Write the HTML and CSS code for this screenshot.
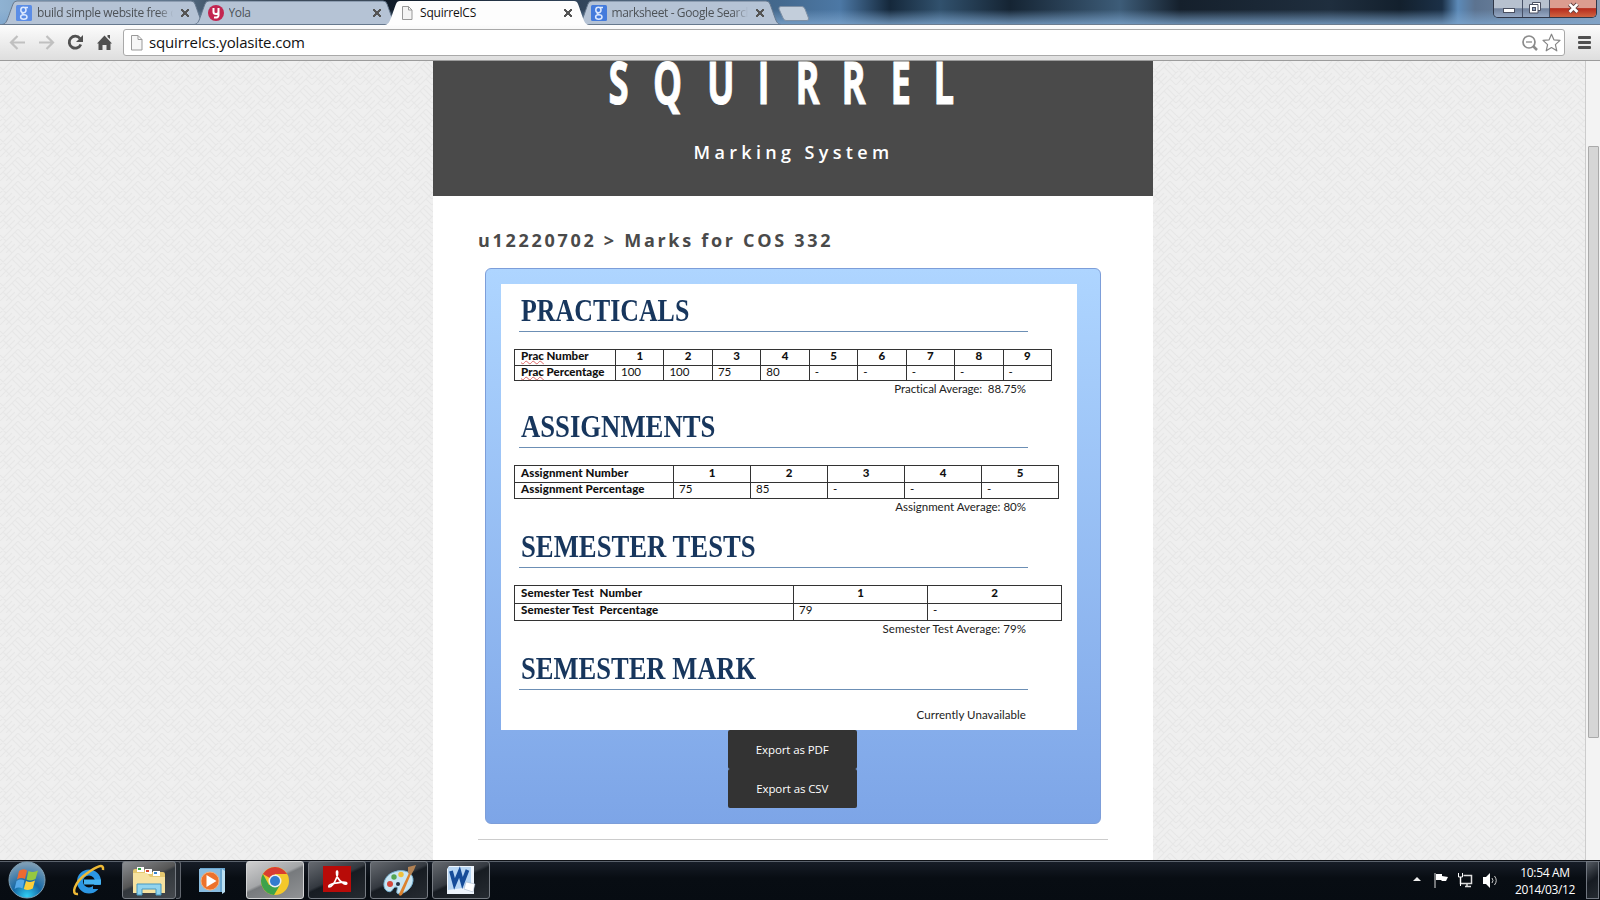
FILE: index.html
```html
<!DOCTYPE html>
<html lang="en">
<head>
<meta charset="utf-8">
<title>SquirrelCS</title>
<link rel="stylesheet" href="styles.css">
</head>
<body>
<div class="desktop">
  <header class="titlebar">
    <div class="tabs">
      <div class="tab">
        <svg class="tab-shape" viewBox="0 0 204 25"><path d="M0 24.5C5 24 5 20 11 4Q12 1 15 1H189Q192 1 193 4C199 20 199 24 204 24.5Z"/></svg>
        <svg class="favicon" viewBox="0 0 16 16"><rect width="16" height="16" rx="1.5" fill="#5b8de6"/><g fill="none" stroke="#dce9ff" stroke-width="1.5"><ellipse cx="7.4" cy="5" rx="2.6" ry="2.7"/><ellipse cx="7.8" cy="12" rx="3.2" ry="2.2"/><path d="M9 2.5h3M7 7.5q-2 1 1 2"/></g></svg>
        <span class="tab-title faded">build simple website free c</span><span class="tab-close"></span>
      </div>
      <div class="tab">
        <svg class="tab-shape" viewBox="0 0 204 25"><path d="M0 24.5C5 24 5 20 11 4Q12 1 15 1H189Q192 1 193 4C199 20 199 24 204 24.5Z"/></svg>
        <svg class="favicon" viewBox="0 0 16 16"><circle cx="8" cy="8" r="8" fill="#c32550"/><path d="M5.500 3v4q0 2 2.500 2t2.500-2V3M10.500 7v3.500q0 2.500-4.500 2" fill="none" stroke="#fff" stroke-width="2"/></svg>
        <span class="tab-title">Yola</span><span class="tab-close"></span>
      </div>
      <div class="tab active">
        <svg class="tab-shape" viewBox="0 0 204 25"><path d="M0 25C5 24 5 20 11 4Q12 1 15 1H189Q192 1 193 4C199 20 199 24 204 25Z"/></svg>
        <svg class="favicon" viewBox="0 0 16 16"><path d="M3.500 1.500h6l3.500 3.500v9.500h-9.500zM9.500 1.500v3.500h3.500" fill="#f4f4f4" stroke="#999"/></svg>
        <span class="tab-title">SquirrelCS</span><span class="tab-close"></span>
      </div>
      <div class="tab">
        <svg class="tab-shape" viewBox="0 0 204 25"><path d="M0 24.5C5 24 5 20 11 4Q12 1 15 1H189Q192 1 193 4C199 20 199 24 204 24.5Z"/></svg>
        <svg class="favicon" viewBox="0 0 16 16"><rect width="16" height="16" rx="1.5" fill="#447bdc"/><g fill="none" stroke="#dce9ff" stroke-width="1.5"><ellipse cx="7.4" cy="5" rx="2.6" ry="2.7"/><ellipse cx="7.8" cy="12" rx="3.2" ry="2.2"/><path d="M9 2.5h3M7 7.5q-2 1 1 2"/></g></svg>
        <span class="tab-title faded">marksheet - Google Search</span><span class="tab-close"></span>
      </div>
      <svg class="new-tab" viewBox="0 0 32 16"><path d="M3 .5H24Q26 .5 27 3L30.500 12Q31 14.500 29 14.500H8Q6 14.500 5 12L1 3Q.5.5 3 .5Z" fill="#c3cedb" stroke="#7e90a5"/></svg>
    </div>
    <div class="window-controls">
      <span class="win min"><svg viewBox="0 0 28 18"><rect x="9.500" y="8.500" width="11" height="4" fill="#fff" stroke="#4a4f60"/></svg></span>
      <span class="win restore"><svg viewBox="0 0 26 18"><path d="M9.500 2.500h8v8h-8z" fill="#fff" stroke="#4a4f60"/><path d="M6.500 4.500h8.500v8.500h-8.500z" fill="#fff" stroke="#4a4f60"/><rect x="9.500" y="7.500" width="3" height="3" fill="#8ea0c0" stroke="#4a4f60"/></svg></span>
      <span class="win close"><svg viewBox="0 0 47 18"><path d="M20 4l8 8m0-8l-8 8" stroke="#604040" stroke-width="4.500"/><path d="M20 4l8 8m0-8l-8 8" stroke="#fff" stroke-width="2.800"/></svg></span>
    </div>
  </header>

  <nav class="toolbar">
    <svg class="nav-icons" viewBox="0 0 123 36">
      <g fill="none" stroke="#c0c0c0" stroke-width="2.200"><path d="M25 17.500H11M17.500 11l-6.500 6.500 6.500 6.500M39 17.500h14M46.500 11l6.500 6.500-6.500 6.500"/></g>
      <path d="M80 13.500a6 6 0 1 0 .8 6" fill="none" stroke="#505050" stroke-width="2.800"/><path d="M83 10v7h-7z" fill="#505050"/>
      <path d="M97 18.500l7.500-8 7.500 8h-1.500V25h-4v-5h-4v5h-4v-6.500zM107.500 10h2.500v4l-2.500-2z" fill="#505050"/>
    </svg>
    <div class="address">
      <svg class="page-icon" viewBox="0 0 16 18"><path d="M2.500 1.500h6.500l4 4v10.500h-10.500zM9 1.500v4h4" fill="#f6f6f6" stroke="#999"/></svg>
      <span class="url">squirrelcs.yolasite.com</span>
      <svg class="address-tools" viewBox="0 0 42 20"><circle cx="8" cy="9" r="6" fill="none" stroke="#8b8b8b" stroke-width="1.700"/><path d="M5 9h6" stroke="#8b8b8b" stroke-width="1.300"/><path d="M12 13l4 4" stroke="#8b8b8b" stroke-width="2.500"/><path d="M30.500 1.200l2.400 5.600 6.100.6-4.600 4.200 1.400 6.200-5.300-3.200-5.300 3.200 1.400-6.200-4.600-4.200 6.100-.6z" fill="#fff" stroke="#858585" stroke-width="1.200" stroke-linejoin="round"/></svg>
    </div>
    <div class="menu"><i></i><i></i><i></i></div>
  </nav>

  <main class="viewport">
    <div class="site">
      <div class="banner">
        <svg class="brand" viewBox="0 0 360 48" aria-label="Squirrel"><text transform="scale(.62 1)" x="-.9 71 158 239.700 301 375 454 523.500" y="43">SQUIRREL</text></svg>
        <p class="tagline">Marking System</p>
      </div>
      <h2 class="crumb">u12220702 &gt; Marks for COS 332</h2>
      <section class="panel">
        <div class="sheet">
          <section class="block practicals">
            <h3><span>PRACTICALS</span></h3>
            <table>
              <tr><th><u>Prac</u> Number</th><th>1</th><th>2</th><th>3</th><th>4</th><th>5</th><th>6</th><th>7</th><th>8</th><th>9</th></tr>
              <tr><th><u>Prac</u> Percentage</th><td>100</td><td>100</td><td>75</td><td>80</td><td>-</td><td>-</td><td>-</td><td>-</td><td>-</td></tr>
            </table>
            <p>Practical Average:&nbsp; 88.75%</p>
          </section>
          <section class="block assignments">
            <h3><span>ASSIGNMENTS</span></h3>
            <table>
              <tr><th>Assignment Number</th><th>1</th><th>2</th><th>3</th><th>4</th><th>5</th></tr>
              <tr><th>Assignment Percentage</th><td>75</td><td>85</td><td>-</td><td>-</td><td>-</td></tr>
            </table>
            <p>Assignment Average: 80%</p>
          </section>
          <section class="block tests">
            <h3><span>SEMESTER TESTS</span></h3>
            <table>
              <tr><th>Semester Test&nbsp; Number</th><th>1</th><th>2</th></tr>
              <tr><th>Semester Test&nbsp; Percentage</th><td>79</td><td>-</td></tr>
            </table>
            <p>Semester Test Average: 79%</p>
          </section>
          <section class="block mark">
            <h3><span>SEMESTER MARK</span></h3>
            <p>Currently Unavailable</p>
          </section>
        </div>
        <div class="actions"><button>Export as PDF</button><button>Export as CSV</button></div>
      </section>
      <hr>
    </div>
    <div class="scrollbar"><div class="thumb"></div></div>
  </main>

  <footer class="taskbar">
    <svg class="start" viewBox="0 0 54 40">
      <defs><radialGradient id="orb" cx=".5" cy=".95" r=".9"><stop offset="0" stop-color="#2fd0f5"/><stop offset=".45" stop-color="#1668a5"/><stop offset="1" stop-color="#7d9db5"/></radialGradient></defs>
      <circle cx="27" cy="20" r="18" fill="url(#orb)" stroke="#7fa0b5"/>
      <path d="M19 11q4-3 8-.5l-2 8.500q-4-2-8 .5z" fill="#ee6a30"/><path d="M28.500 11q5 2 9.500-.5l-2.500 8.500q-4.500 2.500-9 .5z" fill="#95c840"/>
      <path d="M16.500 21q4-2.500 8-.5l-2 8q-4-2-8 .5z" fill="#55a9e8"/><path d="M26 21q4.500 2 9-.5l-2.200 8q-4.500 2.500-9 .5z" fill="#fccf3a"/>
    </svg>
    <div class="task plain ie"><svg viewBox="0 0 34 34"><circle cx="18" cy="17.500" r="9" fill="none" stroke="#2b96e3" stroke-width="6"/><path d="M13 15.500h17v5H13z" fill="#45b2f1"/><path d="M22 21h9v4h-9z" fill="#080d14"/><path d="M7 30C-1 31 4 18 15 10S33-1 32 6" fill="none" stroke="#efba36" stroke-width="2.500"/></svg></div>
    <div class="task explorer"><svg viewBox="0 0 34 34"><path d="M1 7q0-2 2-2h9l2 3h17q2 0 2 2v18H1z" fill="#e5c870"/><path d="M5 3h7v5H5zM13 5h7v5h-7zM21 7h7v5h-7z" fill="#fff"/><path d="M6 4h3v2H6z" fill="#35a646"/><path d="M14 6h3v2h-3z" fill="#d6472e"/><path d="M22 8h3v2h-3z" fill="#3585cb"/><path d="M1 9h14l3 4h15v16H1z" fill="#f6e2a0"/><path d="M5 31V20h24v11h-5v-6H10v6z" fill="#91d4ee" stroke="#4798c1"/></svg></div>
    <div class="task-edge"></div>
    <div class="task plain media"><svg viewBox="0 0 34 34"><path d="M5 4h25v24H5z" fill="#6aa6d0"/><path d="M27 5l3 2v21l-3 2" fill="#bbdff2"/><path d="M4 5h21v23H4z" fill="#8abde0"/><circle cx="15" cy="17" r="9" fill="#ed722b" stroke="#f5b07a"/><path d="M11.500 11l10 6-10 6z" fill="#fff"/></svg></div>
    <div class="task chrome"><svg viewBox="0 0 34 34"><circle cx="17" cy="17" r="14" fill="#f4c82a"/><path d="M17 17L4.900 10A14 14 0 0 1 29.100 10H17z" fill="#d93c30"/><path d="M4.900 10A14 14 0 0 0 16 31l6-10H11z" fill="#3ca24b"/><circle cx="17" cy="17" r="6.500" fill="#eee"/><circle cx="17" cy="17" r="5" fill="#327bce"/></svg></div>
    <div class="task adobe"><svg viewBox="0 0 34 34"><path d="M3 2h28v26H3z" fill="#b80b08"/><path d="M9 23c-2-3 8-4 14-5 6 0 4 4 0 1-4-2-7-7-6.500-11 1-3 2 1 0 6s-5 9-7.500 9z" fill="none" stroke="#fff" stroke-width="1.700"/></svg></div>
    <div class="task paint"><svg viewBox="0 0 34 34"><path d="M5 27C-1 23 2 11 12 8c10-4 20 1 19 9-1 10-14 15-16 12-1-2 2-6-1-6-4 0-3 7-9 4z" fill="#c9e6f4" stroke="#78b2d1"/><circle cx="8" cy="20" r="3" fill="#d5473b"/><circle cx="12" cy="13" r="2.700" fill="#54a652"/><circle cx="19" cy="10.500" r="2.700" fill="#eec03c"/><circle cx="16" cy="20" r="2" fill="#263547"/><path d="M27 9l2 1-9 21q-3 2-3-1z" fill="#dc822e"/><path d="M26 9l0-6 8-2-2 5-3 5z" fill="#b18153"/></svg></div>
    <div class="task word"><svg viewBox="0 0 34 34"><path d="M5 2h25v28H3V5z" fill="#edf4fc"/><path d="M4 3h23v20l-23 3z" fill="#b8d6f4"/><path d="M7 7l3.500 13 5-12 3 11 5-13" fill="none" stroke="#164c99" stroke-width="3.800"/><path d="M22 18l9 2-2 8-9-3z" fill="#fff" stroke="#9dafc6" stroke-width=".5"/></svg></div>
    <div class="tray">
      <svg viewBox="0 0 96 24"><path d="M4 13l4-4 4 4z" fill="#eee"/><path d="M26 5v15" stroke="#ddd"/><path d="M27 6h6v2l6 1-2 4h-4l-1-1h-5z" fill="#fff"/><path d="M54.500 7.500h8v8h-11v-6M56 18.500h6M58 16v3" fill="none" stroke="#ddd" stroke-width="1.500"/><path d="M49.500 5v4h4V5M51.500 9v9" fill="none" stroke="#fff"/><path d="M74 9h3l4-4v15l-4-4h-3z" fill="#fff"/><path d="M83 10q2 2.500 0 5M85.500 8q3.500 4.500 0 9" fill="none" stroke="#ccc"/></svg>
      <div class="clock"><span>10:54 AM</span><span>2014/03/12</span></div>
    </div>
    <div class="show-desktop"></div>
  </footer>
</div>
</body>
</html>
```
FILE: styles.css
```css
* { box-sizing: border-box; }
body { margin: 0; font-family: "Open Sans", "Noto Sans", sans-serif; }
svg { display: block; }
.desktop { width: 1600px; height: 900px; overflow: hidden; display: flex; flex-direction: column; }

/* Browser chrome */
.titlebar {
  height: 25px; flex: none; display: flex; justify-content: space-between; padding-left: 2px;
  background:
    linear-gradient(180deg, rgba(90,130,175,0) 40%, rgba(125,165,205,.8) 100%),
    linear-gradient(90deg, #8fb2d2 0, #587087 180px, #101b28 280px, #111c29 390px, #354960 600px, #44698e 780px, #4c78a5 840px, #15283b 890px, #31516d 940px, #152433 1010px, #3d5c78 1120px, #15202c 1180px, #1f2e3e 1330px, #13202d 1400px, #1b3047 1442px, #5c8ab8 1458px, #5c7390 1475px, #8a9eb6 1600px);
  border-bottom: 1px solid #6c7d90;
}
.tabs { display: flex; height: 25px; }
.tab { position: relative; width: 204px; height: 25px; margin-right: -12.500px; display: flex; align-items: center; padding: 1px 15px 0 14px; }
.tab-shape { position: absolute; inset: 0; width: 204px; height: 25px; }
.tab-shape path { fill: #b5c3d5; stroke: #66788d; stroke-width: 1; }
.tab.active { z-index: 1; }
.tab.active .tab-shape path { fill: #fdfdfd; stroke: none; }
.favicon { position: relative; width: 16px; height: 16px; flex: none; margin-right: 5px; }
.tab-title { position: relative; width: 139px; overflow: hidden; white-space: nowrap; font-size: 12px; letter-spacing: -.38px; line-height: 18px; color: #4d5257; }
.active .tab-title { color: #111; letter-spacing: -.2px; }
.faded { -webkit-mask-image: linear-gradient(90deg, #000 87%, transparent 98%); mask-image: linear-gradient(90deg, #000 87%, transparent 98%); }
.tab-close { position: relative; margin-left: 5px; width: 8px; height: 8px; flex: none; background: linear-gradient(45deg, transparent 42%, #555 42%, #555 58%, transparent 58%), linear-gradient(-45deg, transparent 42%, #555 42%, #555 58%, transparent 58%); }
.new-tab { width: 32px; height: 16px; margin: 6px 0 0 10px; }
.window-controls { display: flex; width: 104px; height: 18px; margin-right: 3px; border: 1px solid #303748; border-top: 0; border-radius: 0 0 5px 5px; overflow: hidden; }
.win { height: 18px; background: linear-gradient(#b7c1cf 0 45%, #70819c 48%, #9badc8); border-right: 1px solid #465066; }
.min { width: 29px; } .restore { width: 27px; } .close { flex: 1; border: 0; background: linear-gradient(#dc9c90 0 42%, #b62b1c 48%, #d26a45); }
.win svg { width: 100%; height: 18px; }

.toolbar { height: 36px; flex: none; display: flex; background: linear-gradient(#fcfcfc, #dedede); border-bottom: 1px solid #9c9c9c; }
.nav-icons { width: 123px; height: 36px; flex: none; }
.address { width: 1442px; height: 27px; margin-top: 4px; display: flex; align-items: center; background: #fff; border: 1px solid #a9a9a9; border-radius: 3px; padding: 0 1px 0 5px; }
.page-icon { width: 16px; height: 18px; }
.url { margin: -2px 0 0 4px; flex: 1; font-size: 15px; letter-spacing: -.16px; line-height: 24px; color: #111; }
.address-tools { width: 42px; height: 20px; }
.menu { margin: 11px 0 0 13px; width: 13px; }
.menu i { display: block; height: 3px; margin-bottom: 2px; border-radius: 1px; background: #505050; }

/* Web page */
.viewport {
  height: 799px; flex: none; position: relative; display: flex; padding-left: 433px; background-color: #efefef;
  background-image: url("data:image/svg+xml,%3Csvg xmlns='http://www.w3.org/2000/svg' width='24' height='24'%3E%3Cg fill='none' stroke='%23e7e7e7' stroke-width='1.100'%3E%3Cpath d='M0 12L12 0M0 18L18 0M0 24L12 12M6 24L15 15M12 24L24 12M12 6L24 18M15 3L24 12M18 0L24 6M0 6L6 12M3 15L12 24M18 18L24 24'/%3E%3C/g%3E%3C/svg%3E");
}
.site { width: 720px; background: #fff; }
.banner { height: 135px; background: #4a4a4a; color: #fff; display: flex; flex-direction: column; align-items: center; }
.brand { width: 360px; height: 48px; margin-right: 8px; overflow: visible; }
.brand text { font: 700 59px "Open Sans", sans-serif; fill: #fff; stroke: #fff; stroke-width: 1px; }
.tagline { margin: 30px 0 0 1px; font-size: 18px; line-height: 26px; font-weight: 600; letter-spacing: 4.350px; white-space: nowrap; }
.crumb { margin: 29px 0 0 45px; height: 31px; font-size: 18px; line-height: 30px; font-weight: 700; letter-spacing: 2.700px; color: #4a4a4a; white-space: nowrap; }
.panel { width: 616px; height: 556px; margin: 12px 0 0 51.500px; border: 1px solid #7d9ed9; border-radius: 6px; padding: 15px 15px 15px 15.500px; background: linear-gradient(#aed5ff, #7da5e7); }
.sheet { width: 576px; height: 446px; background: #fff; padding: 0 0 0 13px; overflow: hidden; }
.block { font-family: Lato, sans-serif; font-size: 11.500px; color: #222; }
.practicals { height: 116px; } .assignments { height: 120px; } .tests { height: 122px; }
.block h3 { margin: 0 0 17px 5px; width: 509px; height: 48px; padding: 9px 0 0 2px; border-bottom: 1px solid #6c8fb5; font: 700 31px/36px "Liberation Serif", serif; color: #17365d; }
.block h3 span { display: inline-block; white-space: nowrap; transform-origin: 0 50%; transform: scaleX(.861); }
.practicals h3 span { transform: scaleX(.835); }
.mark h3 span { transform: scaleX(.856); }
.block table { border-collapse: collapse; table-layout: fixed; color: #111; }
.block th, .block td { border: 1px solid #333; padding: 0 6px 2px; height: 15.500px; line-height: 12.500px; text-align: left; white-space: nowrap; }
.block th { text-align: center; font-weight: 900; }
.block td { padding-left: 5px; }
.block th:first-child { text-align: left; }
.block u { text-decoration: underline wavy #d66 1px; text-underline-offset: 0; text-decoration-skip-ink: none; }
.practicals table { width: 538px; } .practicals th:first-child { width: 101px; }
.assignments table { width: 545px; } .assignments th:first-child { width: 159px; letter-spacing: .12px; }
.tests table { width: 548px; } .tests th:first-child { width: 279px; letter-spacing: .1px; }
.assignments th, .assignments td { height: 16.500px; }
.tests th, .tests td { height: 17.500px; padding-bottom: 3px; }
.block p { margin: 0; width: 512px; line-height: 15px; text-align: right; white-space: nowrap; }
.practicals p { letter-spacing: -.08px; }
.tests p, .mark p { letter-spacing: .06px; }
.actions { display: flex; flex-direction: column; align-items: center; margin-right: 1px; }
.actions button { width: 129px; height: 39px; border: 0; border-radius: 2px; padding: 0; background: #333; color: #fff; font: 11.500px "Open Sans", sans-serif; letter-spacing: -.1px; }
hr { width: 630px; margin: 15px 0 0 45px; border: 0; border-top: 1px solid #ccc; }
.scrollbar { margin-left: auto; width: 15px; background: #f3f3f3; border-left: 1px solid #ccc; padding: 85px 1px 0 2px; }
.thumb { height: 592px; background: #d6d6d6; border: 1px solid #aaa; border-radius: 1px; }

/* Taskbar */
.taskbar { height: 40px; flex: none; display: flex; align-items: flex-start; background: linear-gradient(#101318 0 1px, #5b626c 1px 2px, #171d27 2px, #080d13 45%, #070c12); }
.start { width: 54px; height: 40px; }
.task { width: 58px; height: 38px; margin: 1px 4px 0 0; padding: 2px 0 0 11px; border: 1px solid #767b82; border-radius: 3px; background: linear-gradient(155deg, #666a70, #343940 45%, #171c22 50%, #262b31); }
.task svg { width: 34px; height: 34px; }
.task.plain { background: none; border-color: transparent; }
.ie { margin-right: 10px; margin-left: 0; padding-left: 16px; }
.explorer { width: 54px; margin-right: 0; padding-left: 9px; background: linear-gradient(155deg, #8b8e92, #555 45%, #33383d 50%, #45494e); }
.task-edge { width: 5px; height: 38px; margin-top: 1px; border: 1px solid #62676f; border-left: 0; border-radius: 0 3px 3px 0; background: #23282f; }
.media { width: 61px; padding-left: 13px; }
.chrome { background: linear-gradient(155deg, #cfcfcf, #a4a6a8 45%, #777a7d 50%, #919395); border-color: #d3d4d5; }
.tray { margin-left: auto; display: flex; }
.tray svg { width: 96px; height: 24px; margin-top: 8px; }
.clock { width: 68px; margin-left: 6px; display: flex; flex-direction: column; align-items: center; color: #fff; font-size: 12px; line-height: 17px; letter-spacing: -.35px; padding-top: 4px; white-space: nowrap; }
.show-desktop { width: 13px; height: 38px; margin: 1px 1px 0 7px; border: 1px solid #717780; background: linear-gradient(145deg, #555b63, #161b22 50%, #252b31); }
```
